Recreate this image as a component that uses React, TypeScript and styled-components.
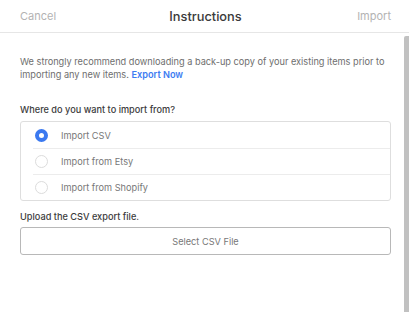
import React from 'react';
import styled, { createGlobalStyle } from 'styled-components';

const GlobalStyle = createGlobalStyle`
  html, body {
    margin: 0;
    padding: 0;
    background: #ffffff;
  }
  body {
    font-family: Inter, "Noto Sans", sans-serif;
    -webkit-font-smoothing: antialiased;
  }
`;

const Page = styled.div`
  width: 409px;
  height: 312px;
  display: flex;
  flex-direction: column;
  overflow: hidden;
  background: #fff;
`;

const Header = styled.div`
  height: 32px;
  flex: none;
  display: grid;
  grid-template-columns: 1fr auto 1fr;
  align-items: center;
  padding: 0 18px 0 20px;
  border-bottom: 1px solid #e6e6e6;
`;

const HeaderLink = styled.span<{ $right?: boolean }>`
  font-size: 11px;
  color: #b3b3b3;
  justify-self: ${p => (p.$right ? 'end' : 'start')};
`;

const Title = styled.h1`
  margin: 0;
  font-size: 12.8px;
  font-weight: 500;
  color: #3a3a3a;
`;

const Body = styled.div`
  flex: 1;
  display: flex;
  min-height: 0;
`;

const Content = styled.div`
  flex: 1;
  padding: 22px 13px 0 20px;
  display: flex;
  flex-direction: column;
`;

const ScrollThumb = styled.div`
  width: 5px;
  margin-top: 3px;
  background: #c1c1c1;
  border-radius: 2px 0 0 0;
`;

const Intro = styled.div`
  font-size: 9.2px;
  line-height: 13px;
  color: #6e6e6e;
`;

const IntroLine = styled.div`
  white-space: nowrap;
`;

const ExportLink = styled.span`
  color: #3d7cf2;
  font-weight: 600;
`;

const Label = styled.div<{ $top: number }>`
  margin-top: ${p => p.$top}px;
  font-size: 9.2px;
  font-weight: 500;
  color: #3c3c3c;
  line-height: 12px;
`;

const OptionBox = styled.div`
  margin-top: 5px;
  border: 1px solid #dedede;
  border-radius: 3px;
  display: flex;
  flex-direction: column;
`;

const OptionRow = styled.label<{ $first?: boolean }>`
  box-sizing: border-box;
  height: 26px;
  margin-left: 12px;
  display: flex;
  align-items: center;
  gap: 13px;
  border-top: ${p => (p.$first ? 'none' : '1px solid #ececec')};
  font-size: 9.2px;
  color: #777;
`;

const Radio = styled.span<{ $checked?: boolean }>`
  width: 13px;
  height: 13px;
  margin-left: 2px;
  box-sizing: border-box;
  border-radius: 50%;
  flex: none;
  border: ${p => (p.$checked ? '4.5px solid #3b79f0' : '1px solid #dcdcdc')};
  background: #fff;
`;

const FileButton = styled.button`
  margin-top: 4px;
  height: 28px;
  border: 1px solid #b8b8b8;
  border-radius: 3px;
  background: #fff;
  font-family: inherit;
  font-size: 9.2px;
  color: #777;
  cursor: pointer;
`;

const options = ['Import CSV', 'Import from Etsy', 'Import from Shopify'];

export default function App() {
  return (
    <>
      <GlobalStyle />
      <Page>
        <Header>
          <HeaderLink>Cancel</HeaderLink>
          <Title>Instructions</Title>
          <HeaderLink $right>Import</HeaderLink>
        </Header>
        <Body>
          <Content>
            <Intro>
              <IntroLine>
                We strongly recommend downloading a back-up copy of your existing items prior to
              </IntroLine>
              <IntroLine>
                <span>importing any new items.</span> <ExportLink>Export Now</ExportLink>
              </IntroLine>
            </Intro>
            <Label $top={23}>Where do you want to import from?</Label>
            <OptionBox>
              {options.map((o, i) => (
                <OptionRow key={o} $first={i === 0}>
                  <Radio $checked={i === 0} />
                  {o}
                </OptionRow>
              ))}
            </OptionBox>
            <Label $top={10}>Upload the CSV export file.</Label>
            <FileButton>Select CSV File</FileButton>
          </Content>
          <ScrollThumb />
        </Body>
      </Page>
    </>
  );
}
